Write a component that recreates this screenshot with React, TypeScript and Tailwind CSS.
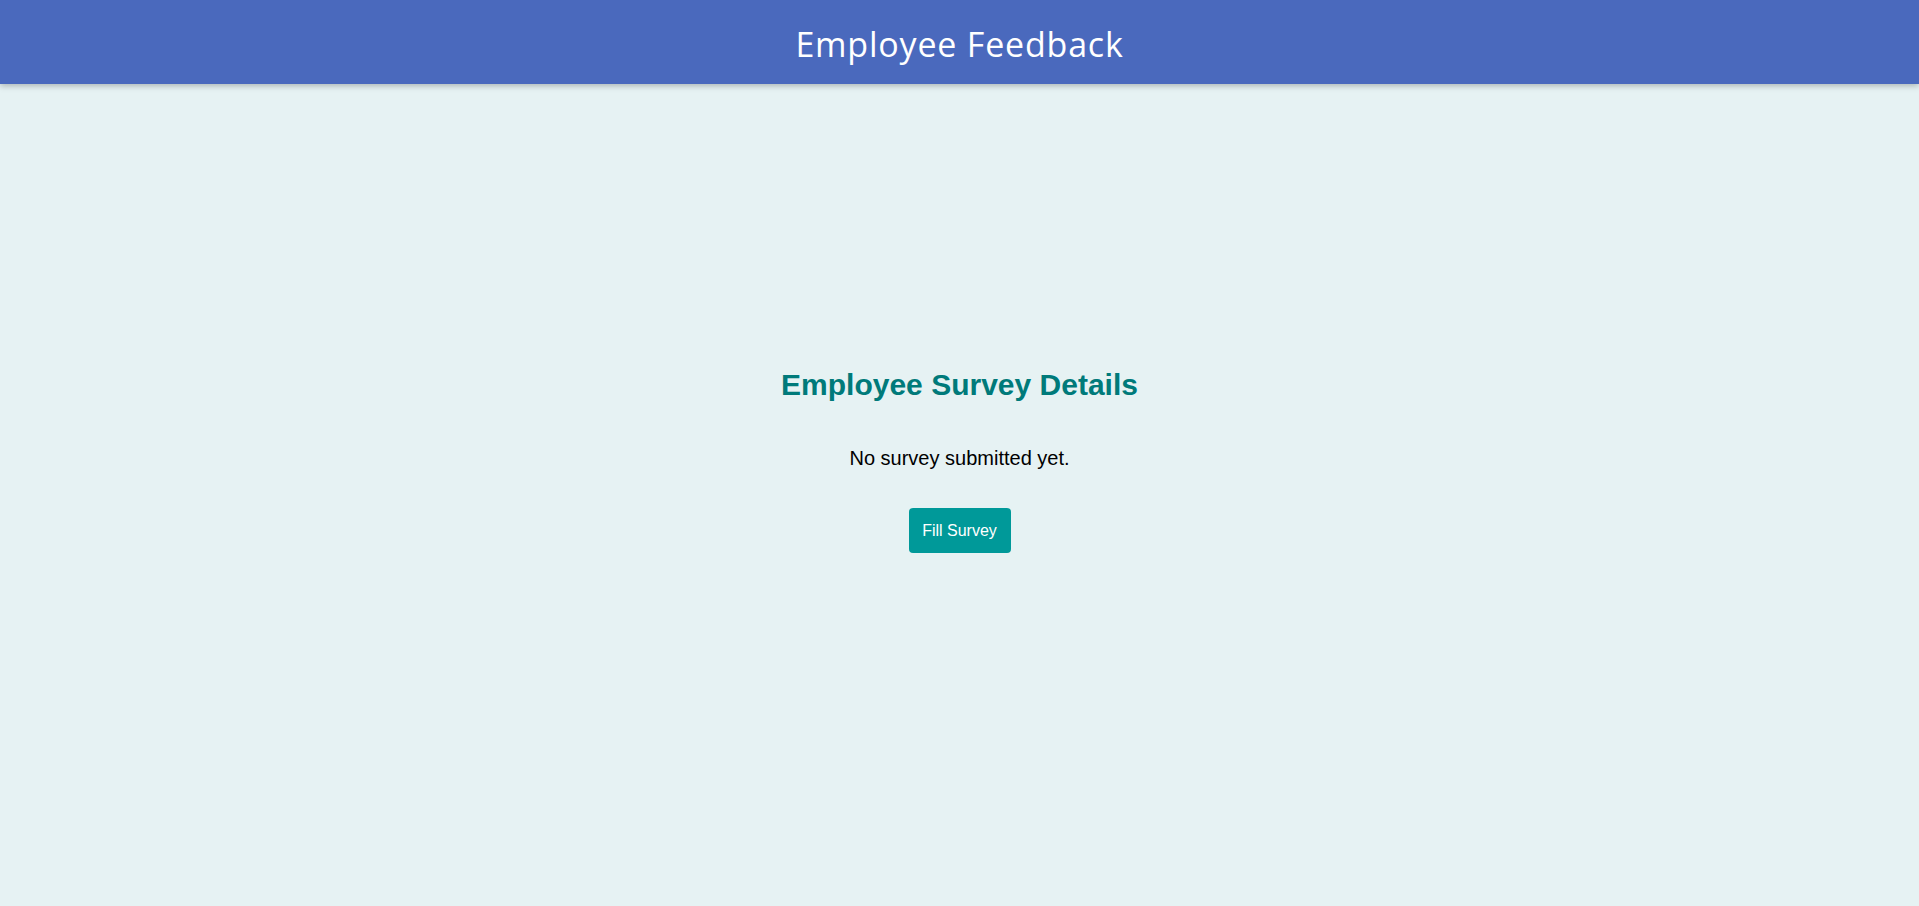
export default function App() {
  return (
    <div className="min-h-screen bg-[#e6f2f3] font-['Liberation_Sans',Arial,sans-serif]">
      <header className="h-[84px] bg-[#4a69bd] flex items-center justify-center pt-[4px] shadow-[0_2px_6px_rgba(0,0,0,0.25)]">
        <h1 className="text-white text-[34px] font-['Open_Sans',sans-serif] tracking-[0.8px]">Employee Feedback</h1>
      </header>
      <main className="flex flex-col items-center pt-[284px]">
        <h2 className="text-[#007a7a] text-[30px] font-bold leading-[34px]">Employee Survey Details</h2>
        <p className="mt-[44px] text-black text-[20px] leading-[24px]">No survey submitted yet.</p>
        <button className="mt-[38px] w-[102px] h-[45px] bg-[#009999] text-white text-[16px] rounded-[4px]">Fill Survey</button>
      </main>
    </div>
  );
}
